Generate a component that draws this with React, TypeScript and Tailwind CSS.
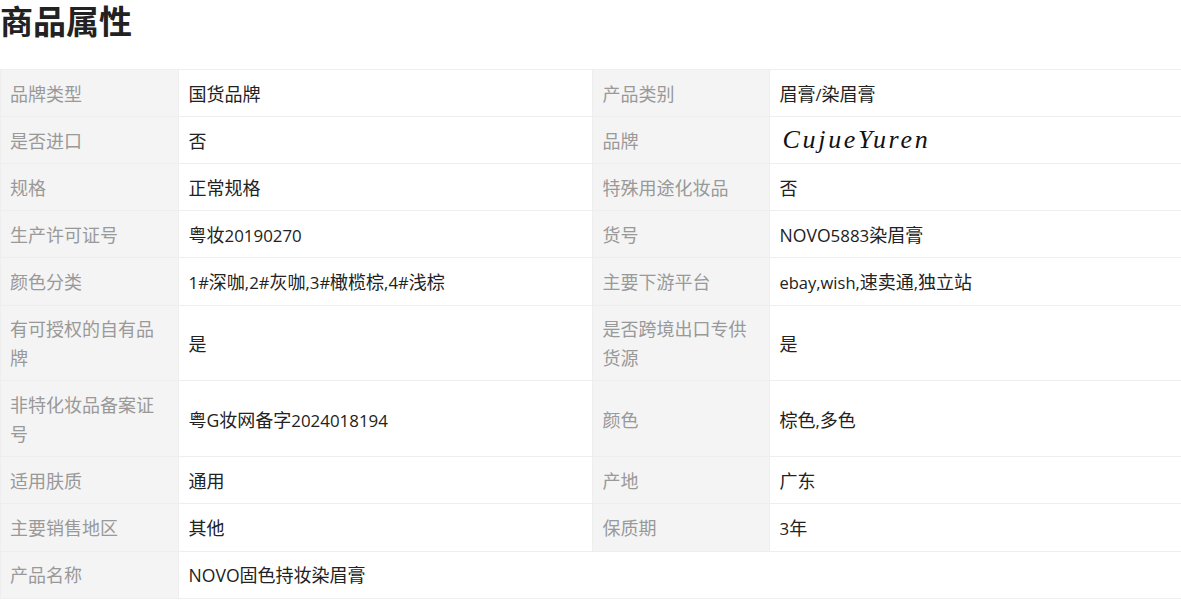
const rows: [string, string, string, string][] = [
  ["品牌类型", "国货品牌", "产品类别", "眉膏/染眉膏"],
  ["是否进口", "否", "品牌", "__logo"],
  ["规格", "正常规格", "特殊用途化妆品", "否"],
  ["生产许可证号", "粤妆20190270", "货号", "NOVO5883染眉膏"],
  ["颜色分类", "1#深咖,2#灰咖,3#橄榄棕,4#浅棕", "主要下游平台", "ebay,wish,速卖通,独立站"],
  ["有可授权的自有品牌", "是", "是否跨境出口专供货源", "是"],
  ["非特化妆品备案证号", "粤G妆网备字2024018194", "颜色", "棕色,多色"],
  ["适用肤质", "通用", "产地", "广东"],
  ["主要销售地区", "其他", "保质期", "3年"],
];

const label =
  "border border-[#eeeeee] bg-[#f4f4f4] py-[8.66px] pr-[10px] pl-[10px] text-left align-middle font-normal text-[#999999] first:pl-[9px]";
const value = "border border-[#eeeeee] px-[10px] py-[8.66px] align-middle text-[#222222]";

function classFor(p: string) {
  if (/^[A-Z]+$/.test(p)) return "text-[17.6px] leading-none [font-family:'Open_Sans',sans-serif]";
  if (/^[0-9]+$/.test(p)) return "text-[16.9px] leading-none [font-family:'Open_Sans',sans-serif]";
  if (/^[a-z,#/]+$/.test(p)) return "text-[16.5px] leading-none [font-family:'Open_Sans',sans-serif]";
  return "";
}

function Mixed({ text }: { text: string }) {
  const parts = text.split(/([A-Z]+|[0-9]+|[a-z,#/]+)/).filter(Boolean);
  return (
    <>
      {parts.map((p, i) => (
        <span key={i} className={classFor(p)}>
          {p}
        </span>
      ))}
    </>
  );
}

function Logo() {
  return (
    <span className="ml-[3px] inline-block h-[28px] text-[26px] leading-[28px] tracking-[2.7px] text-[#111111] italic [font-family:'Liberation_Serif',serif]">
      CujueYuren
    </span>
  );
}

export default function App() {
  return (
    <div className="w-[1181px] bg-white text-[18px] leading-[28.8px] [font-family:'Noto_Sans_CJK_SC',sans-serif]">
      <h2 className="mb-[29px] text-[33px] leading-[40px] font-bold text-[#222222]">商品属性</h2>
      <table className="w-[1181px] table-fixed border-collapse">
        <colgroup>
          <col className="w-[177.5px]" />
          <col className="w-[414px]" />
          <col className="w-[177px]" />
          <col className="w-[412.5px]" />
        </colgroup>
        <tbody>
          {rows.map((r) => (
            <tr key={r[0]}>
              <th className={label}>{r[0]}</th>
              <td className={value}>
                <Mixed text={r[1]} />
              </td>
              <th className={label}>{r[2]}</th>
              <td className={value}>{r[3] === "__logo" ? <Logo /> : <Mixed text={r[3]} />}</td>
            </tr>
          ))}
          <tr>
            <th className={label}>产品名称</th>
            <td className={value} colSpan={3}>
              <Mixed text="NOVO固色持妆染眉膏" />
            </td>
          </tr>
        </tbody>
      </table>
    </div>
  );
}
